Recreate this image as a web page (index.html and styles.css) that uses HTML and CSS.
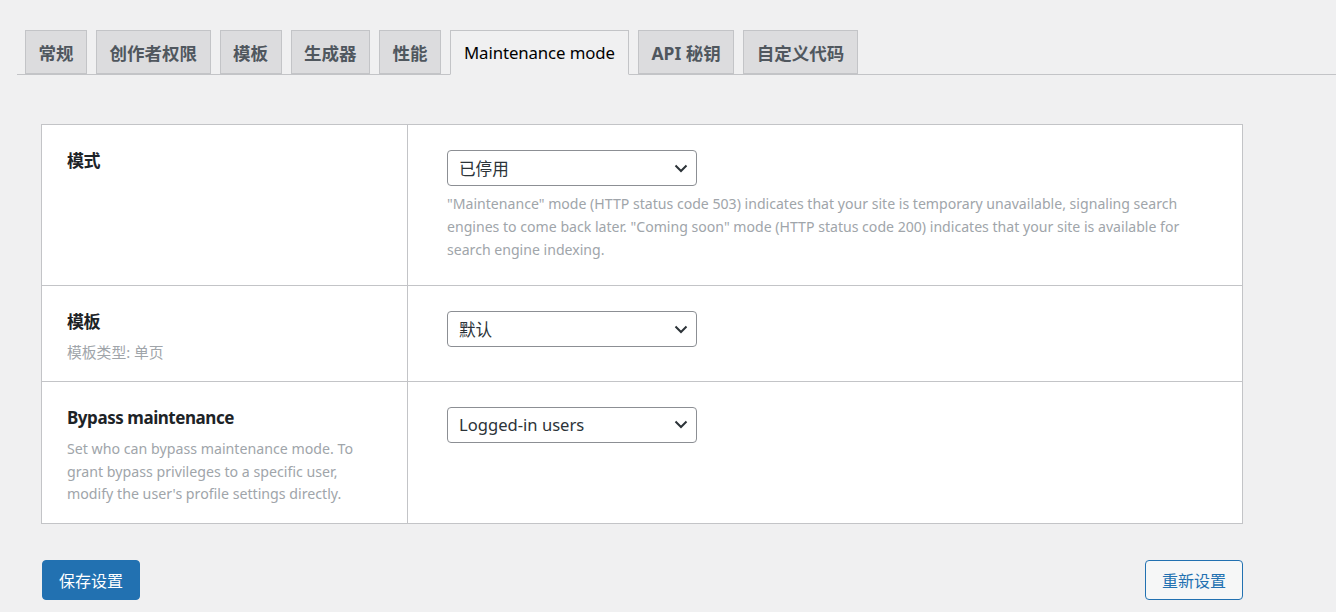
FILE: index.html
```html
<!DOCTYPE html>
<html lang="zh">
<head>
<meta charset="utf-8">
<title>Maintenance mode</title>
<link rel="stylesheet" href="styles.css">
</head>
<body>
<nav class="tabs">
  <a class="tab">常规</a>
  <a class="tab">创作者权限</a>
  <a class="tab">模板</a>
  <a class="tab">生成器</a>
  <a class="tab">性能</a>
  <a class="tab active">Maintenance mode</a>
  <a class="tab">API 秘钥</a>
  <a class="tab">自定义代码</a>
</nav>
<main class="content">
  <div class="settings">
    <div class="row row-mode">
      <div class="label-cell">
        <div class="label">模式</div>
      </div>
      <div class="field-cell">
        <div class="select"><span>已停用</span><svg class="chev" width="14" height="9" viewBox="0 0 14 9"><path d="M1.5 1.5 L7 7 L12.5 1.5" fill="none" stroke="#2c3338" stroke-width="2"/></svg></div>
        <p class="desc">"Maintenance" mode (HTTP status code 503) indicates that your site is temporary unavailable, signaling search engines to come back later. "Coming soon" mode (HTTP status code 200) indicates that your site is available for search engine indexing.</p>
      </div>
    </div>
    <div class="row">
      <div class="label-cell">
        <div class="label">模板</div>
        <p class="sub sub-cjk">模板类型: 单页</p>
      </div>
      <div class="field-cell">
        <div class="select"><span>默认</span><svg class="chev" width="14" height="9" viewBox="0 0 14 9"><path d="M1.5 1.5 L7 7 L12.5 1.5" fill="none" stroke="#2c3338" stroke-width="2"/></svg></div>
      </div>
    </div>
    <div class="row">
      <div class="label-cell">
        <div class="label">Bypass maintenance</div>
        <p class="sub">Set who can bypass maintenance mode. To grant bypass privileges to a specific user, modify the user's profile settings directly.</p>
      </div>
      <div class="field-cell">
        <div class="select"><span>Logged-in users</span><svg class="chev" width="14" height="9" viewBox="0 0 14 9"><path d="M1.5 1.5 L7 7 L12.5 1.5" fill="none" stroke="#2c3338" stroke-width="2"/></svg></div>
      </div>
    </div>
  </div>
  <div class="actions">
    <button class="btn btn-primary">保存设置</button>
    <button class="btn btn-secondary">重新设置</button>
  </div>
</main>
</body>
</html>
```
FILE: styles.css
```css
* { box-sizing: border-box; }
html, body {
  margin: 0;
  padding: 0;
  background: #f0f0f1;
}
body {
  font-family: "Noto Sans", "Noto Sans CJK SC", sans-serif;
  color: #1d2327;
}
.tabs {
  display: flex;
  gap: 9px;
  margin-left: 17px;
  padding: 30px 0 0 8px;
  border-bottom: 1px solid #c3c4c7;
}
.tab {
  display: flex;
  align-items: center;
  height: 44px;
  padding: 0 12.5px;
  margin-bottom: -1px;
  border: 1px solid #c3c4c7;
  background: #dcdcde;
  color: #50575e;
  font-size: 17.5px;
  font-weight: 700;
  white-space: nowrap;
}
.tab.active {
  background: #f0f0f1;
  border-bottom-color: #f0f0f1;
  color: #000;
  font-weight: 400;
  font-size: 16.8px;
  letter-spacing: -0.1px;
  padding: 0 13px;
  height: 45px;
}
.content {
  padding: 49px 93px 0 41px;
}
.settings {
  background: #fff;
  border: 1px solid #c3c4c7;
}
.row {
  display: grid;
  grid-template-columns: 366px 1fr;
  border-top: 1px solid #c3c4c7;
}
.row:first-child { border-top: none; }
.label-cell {
  padding: 24px 26px 17px 25px;
  border-right: 1px solid #c3c4c7;
}
.label {
  font-size: 17px;
  font-weight: 700;
  line-height: 23px;
  letter-spacing: -0.45px;
  color: #1d2327;
}
.sub {
  margin: 9px 0 0;
  font-size: 14.2px;
  line-height: 22.6px;
  color: #a0a5aa;
}
.sub-cjk {
  margin-top: 8px;
  font-size: 14.8px;
}
.field-cell {
  padding: 25px 40px 24px 39px;
}
.select {
  display: flex;
  align-items: center;
  justify-content: space-between;
  width: 250px;
  height: 36px;
  padding: 0 8px 0 11px;
  border: 1px solid #8c8f94;
  border-radius: 4px;
  background: #fff;
  font-size: 16.6px;
  color: #2c3338;
}
.chev { display: block; }
.desc {
  margin: 7px 0 0;
  font-size: 14.1px;
  line-height: 22.8px;
  color: #a0a5aa;
}
.actions {
  display: flex;
  justify-content: space-between;
  margin-top: 36px;
  padding-left: 1px;
}
.btn {
  height: 40px;
  padding: 0 16px;
  border-radius: 4px;
  font-family: "Noto Sans", "Noto Sans CJK SC", sans-serif;
  font-size: 16px;
  cursor: pointer;
}
.btn-primary {
  background: #2271b1;
  border: 1px solid #2271b1;
  color: #fff;
}
.btn-secondary {
  background: #f6f7f7;
  border: 1px solid #2271b1;
  color: #2271b1;
}
```
